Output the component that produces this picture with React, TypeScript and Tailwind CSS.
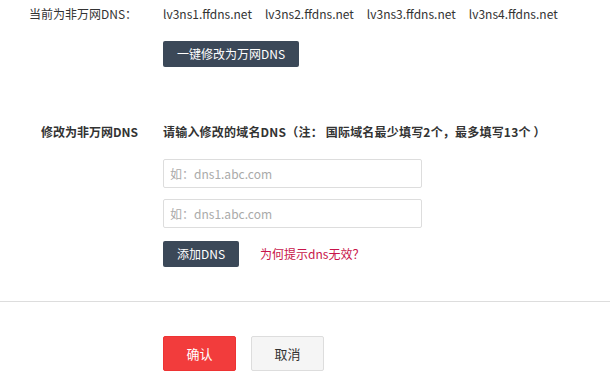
const font = "font-['Microsoft_YaHei','Noto_Sans_CJK_SC',sans-serif]";

export default function App() {
  return (
    <div className={`w-[610px] h-[385px] bg-white text-[12px] text-[#333] ${font}`}>
      {/* current dns */}
      <div className="flex pt-[5px]">
        <div className="w-[138px] shrink-0 pl-[29px] leading-[18px]">当前为非万网DNS：</div>
        <div className="ml-[25px] flex gap-[13px] leading-[18px]">
          <span>lv3ns1.ffdns.net</span>
          <span>lv3ns2.ffdns.net</span>
          <span>lv3ns3.ffdns.net</span>
          <span>lv3ns4.ffdns.net</span>
        </div>
      </div>
      <div className="pl-[163px] mt-[18px]">
        <button className="h-[26px] w-[136px] rounded-[2px] bg-[#3b4858] text-white text-[12px]">
          一键修改为万网DNS
        </button>
      </div>

      {/* edit dns */}
      <div className="flex mt-[56px]">
        <div className="w-[138px] shrink-0 text-right font-bold leading-[18px]">修改为非万网DNS</div>
        <div className="ml-[25px] flex flex-col">
          <div className="font-bold leading-[18px] tracking-[0.2px]">请输入修改的域名DNS（注： 国际域名最少填写2个，最多填写13个 ）</div>
          <input
            placeholder="如：dns1.abc.com"
            className="mt-[18px] h-[29px] w-[259px] border border-[#ddd] rounded-[2px] px-[6px] text-[12px] placeholder:text-[#aaa] outline-none"
          />
          <input
            placeholder="如：dns1.abc.com"
            className="mt-[11px] h-[29px] w-[259px] border border-[#ddd] rounded-[2px] px-[6px] text-[12px] placeholder:text-[#aaa] outline-none"
          />
          <div className="mt-[13px] flex items-center gap-[21px]">
            <button className="h-[26px] w-[76px] rounded-[2px] bg-[#3b4858] text-white text-[12px]">添加DNS</button>
            <a className="text-[#c8144a] cursor-pointer">为何提示dns无效？</a>
          </div>
        </div>
      </div>

      <div className="mt-[34px] border-t border-[#ddd]" />

      <div className="pl-[163px] mt-[34px] flex gap-[15px]">
        <button className="h-[35px] w-[73px] rounded-[2px] bg-[#f23c3c] border border-[#e33] text-white text-[13px]">确认</button>
        <button className="h-[35px] w-[73px] rounded-[2px] bg-[#f5f5f5] border border-[#ddd] text-[#333] text-[13px]">取消</button>
      </div>
    </div>
  );
}
